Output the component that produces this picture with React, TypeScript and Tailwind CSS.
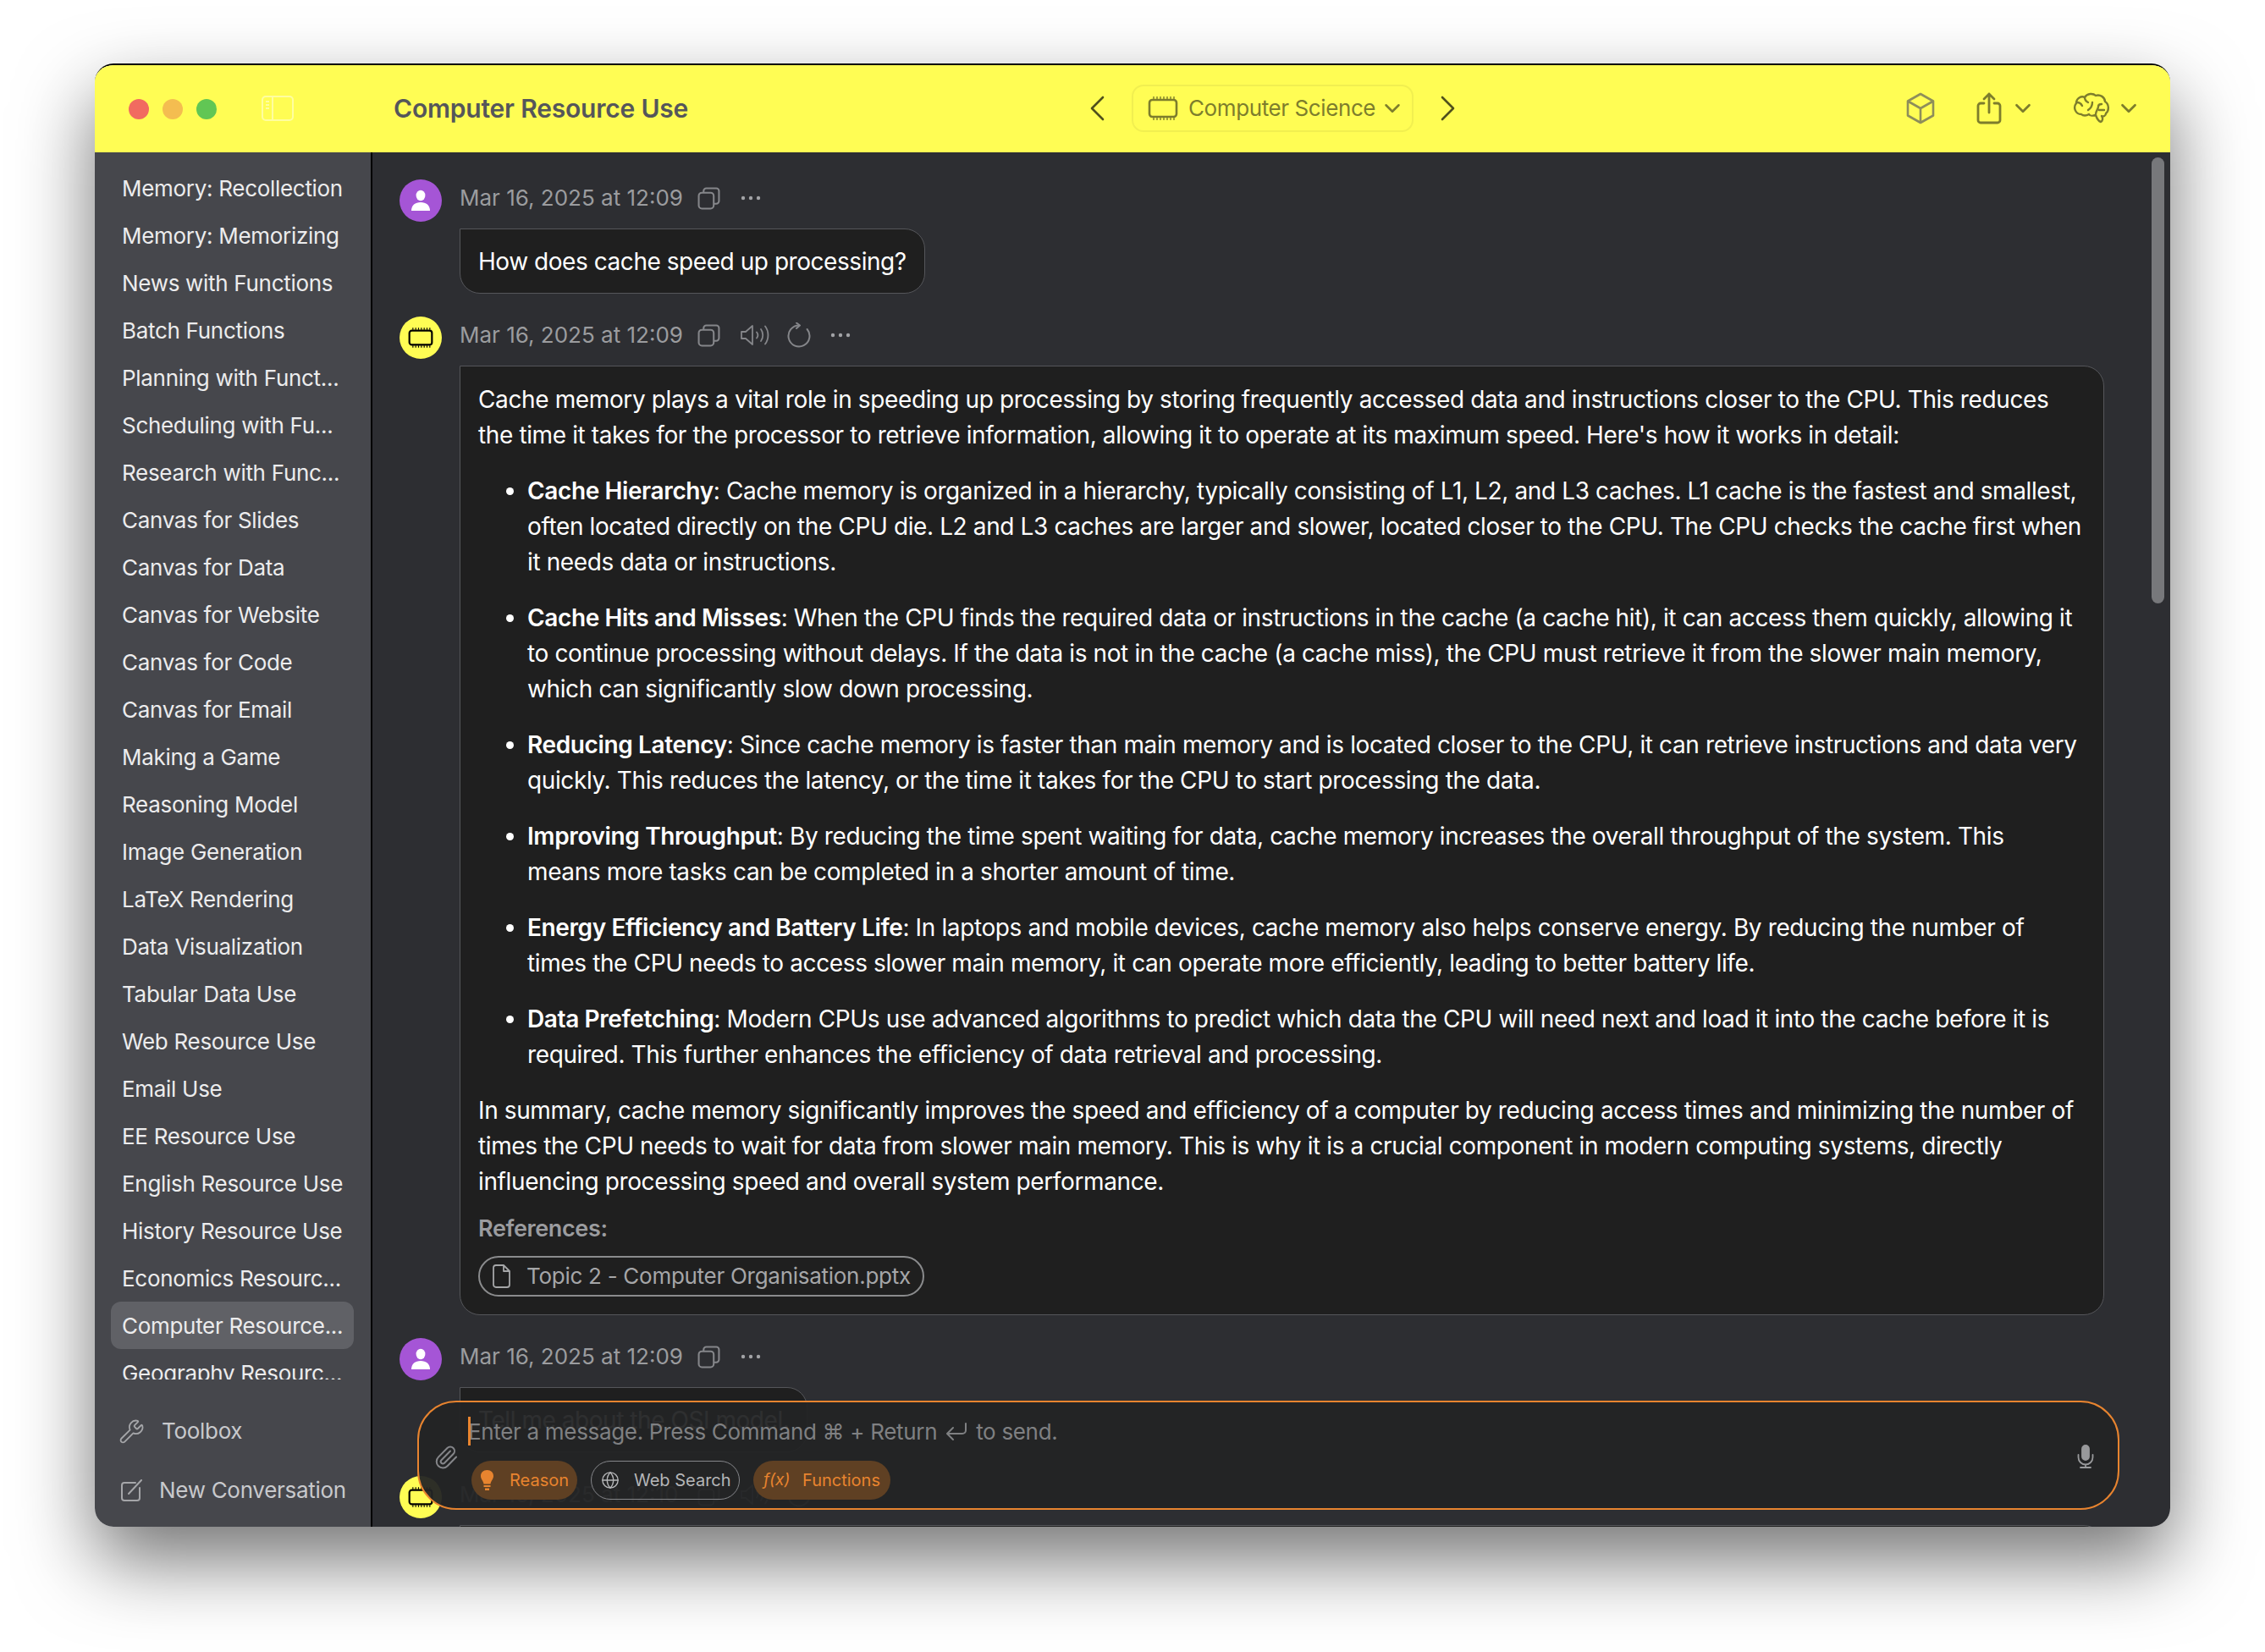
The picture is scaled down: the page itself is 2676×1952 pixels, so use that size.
import React from 'react';
import { ChevronDown, Wrench, Globe, Paperclip } from 'lucide-react';

const conversations = [
  'Memory: Recollection',
  'Memory: Memorizing',
  'News with Functions',
  'Batch Functions',
  'Planning with Funct...',
  'Scheduling with Fu...',
  'Research with Func...',
  'Canvas for Slides',
  'Canvas for Data',
  'Canvas for Website',
  'Canvas for Code',
  'Canvas for Email',
  'Making a Game',
  'Reasoning Model',
  'Image Generation',
  'LaTeX Rendering',
  'Data Visualization',
  'Tabular Data Use',
  'Web Resource Use',
  'Email Use',
  'EE Resource Use',
  'English Resource Use',
  'History Resource Use',
  'Economics Resourc...',
  'Computer Resource...',
  'Geography Resourc...',
];

const bullets = [
  {
    title: 'Cache Hierarchy',
    body: ': Cache memory is organized in a hierarchy, typically consisting of L1, L2, and L3 caches. L1 cache is the fastest and smallest, often located directly on the CPU die. L2 and L3 caches are larger and slower, located closer to the CPU. The CPU checks the cache first when it needs data or instructions.',
  },
  {
    title: 'Cache Hits and Misses',
    body: ': When the CPU finds the required data or instructions in the cache (a cache hit), it can access them quickly, allowing it to continue processing without delays. If the data is not in the cache (a cache miss), the CPU must retrieve it from the slower main memory, which can significantly slow down processing.',
  },
  {
    title: 'Reducing Latency',
    body: ': Since cache memory is faster than main memory and is located closer to the CPU, it can retrieve instructions and data very quickly. This reduces the latency, or the time it takes for the CPU to start processing the data.',
  },
  {
    title: 'Improving Throughput',
    body: ': By reducing the time spent waiting for data, cache memory increases the overall throughput of the system. This means more tasks can be completed in a shorter amount of time.',
  },
  {
    title: 'Energy Efficiency and Battery Life',
    body: ': In laptops and mobile devices, cache memory also helps conserve energy. By reducing the number of times the CPU needs to access slower main memory, it can operate more efficiently, leading to better battery life.',
  },
  {
    title: 'Data Prefetching',
    body: ': Modern CPUs use advanced algorithms to predict which data the CPU will need next and load it into the cache before it is required. This further enhances the efficiency of data retrieval and processing.',
  },
];

const ChipIcon = ({ className }: { className?: string }) => (
  <svg viewBox="0 0 36 28" fill="none" stroke="currentColor" className={className}>
    <rect x="2" y="4" width="32" height="20" rx="3.5" strokeWidth="2.6" />
    <path d="M7 0v3M11 0v3M15 0v3M19 0v3M23 0v3M27 0v3M31 0v3M7 25v3M11 25v3M15 25v3M19 25v3M23 25v3M27 25v3M31 25v3" strokeWidth="1.4" />
  </svg>
);

const CopyIcon = () => (
  <svg viewBox="0 0 26 26" fill="none" stroke="currentColor" strokeWidth="2" className="w-[27px] h-[27px] text-[#85868a]">
    <rect x="1.5" y="6.5" width="17" height="18" rx="3.5" />
    <path d="M7 6V4.5a3 3 0 0 1 3-3h11.5a3 3 0 0 1 3 3V16a3 3 0 0 1-3 3H19" />
  </svg>
);

const DotsIcon = () => (
  <svg viewBox="0 0 24 6" fill="currentColor" className="w-[24px] h-[6px] text-[#a2a3a6]">
    <circle cx="3" cy="3" r="2.2" />
    <circle cx="12" cy="3" r="2.2" />
    <circle cx="21" cy="3" r="2.2" />
  </svg>
);

const SpeakerIcon = () => (
  <svg viewBox="0 0 36 26" fill="none" stroke="currentColor" strokeWidth="1.8" strokeLinecap="round" strokeLinejoin="round" className="w-[36px] h-[26px] text-[#85868a]">
    <path d="M2 9h5l8-7v22l-8-7H2z" />
    <path d="M20 9.500c1.600 2 1.600 5 0 7M25 6c3 4 3 10 0 14M30 2.500c4.600 6 4.600 15 0 21" />
  </svg>
);

const RefreshIcon = () => (
  <svg viewBox="0 0 28 30" fill="none" stroke="currentColor" strokeWidth="2" strokeLinecap="round" strokeLinejoin="round" className="w-[28px] h-[30px] text-[#85868a]">
    <path d="M14 3.500A12.500 12.500 0 1 0 23.600 8" />
    <path d="M11 .5l4 3-4 3.500" />
  </svg>
);

const UserAvatar = () => (
  <div className="w-[50px] h-[50px] shrink-0 rounded-full bg-[#a555d6] flex items-center justify-center">
    <svg viewBox="0 0 24 26" fill="white" className="w-[24px] h-[26px]">
      <ellipse cx="12" cy="7" rx="5.400" ry="6.200" />
      <path d="M1 25c0-6.500 4.500-10 11-10s11 3.500 11 10z" />
    </svg>
  </div>
);

const BotAvatar = () => (
  <div className="w-[50px] h-[50px] shrink-0 rounded-full bg-[#fffd54] flex items-center justify-center text-black">
    <ChipIcon className="w-[30px] h-[24px]" />
  </div>
);

const MessageHeader = ({ bot, time = '12:09' }: { bot?: boolean; time?: string }) => (
  <div className="flex items-center h-[50px]">
    {bot ? <BotAvatar /> : <UserAvatar />}
    <div className="flex items-center ml-[21px] mb-[6px] text-[#9b9c9f] text-[26px] tracking-normal">
      <span className="w-[281px]">Mar 16, 2025 at {time}</span>
      <CopyIcon />
      {bot && (
        <>
          <div className="ml-[23px]">
            <SpeakerIcon />
          </div>
          <div className="ml-[20px]">
            <RefreshIcon />
          </div>
          <div className="ml-[23px]">
            <DotsIcon />
          </div>
        </>
      )}
      {!bot && (
        <div className="ml-[24px]">
          <DotsIcon />
        </div>
      )}
    </div>
  </div>
);

const Bubble = ({ children }: { children: React.ReactNode }) => (
  <div className="mt-[8px] ml-[71px] w-fit h-[77px] flex items-center px-[21px] bg-[#1f1f1f] border border-[#55565a] rounded-[24px] rounded-tl-none text-white tracking-[-0.45px]">
    {children}
  </div>
);

const Sidebar = () => (
  <aside className="w-[328px] shrink-0 bg-[#46474c] border-r-2 border-black flex flex-col text-[26px] tracking-[-0.3px]">
    <div className="h-[1450px] overflow-hidden pt-[14px] pl-[19px] pr-[20px] text-[#ececed]">
      {conversations.map((name) => (
        <div
          key={name}
          className={`h-[56px] px-[13px] pt-[2px] flex items-center whitespace-nowrap rounded-[12px] ${
            name === 'Computer Resource...' ? 'bg-[#606166]' : ''
          }`}
        >
          {name}
        </div>
      ))}
    </div>
    <div className="flex items-center pl-[28px] mt-[40px] text-[#c8c9cc]">
      <Wrench className="w-[31px] h-[31px] text-[#a5a6a9]" strokeWidth={1.4} />
      <span className="ml-[20px]">Toolbox</span>
    </div>
    <div className="flex items-center pl-[31px] mt-[28px] text-[#c8c9cc]">
      <svg viewBox="0 0 26 26" fill="none" stroke="#a5a6a9" strokeWidth="2" strokeLinecap="round" className="w-[26px] h-[26px]">
        <path d="M17 4H4a3 3 0 0 0-3 3v15a3 3 0 0 0 3 3h15a3 3 0 0 0 3-3V10M9 17L24 1" />
      </svg>
      <span className="ml-[19px]">New Conversation</span>
    </div>
  </aside>
);

const Header = () => (
  <header className="h-[103px] shrink-0 bg-[#fffd54] flex items-center pb-[2px] text-[#7d7d2c]">
    <div className="flex items-center gap-[16px] ml-[40px] mt-[2px]">
      <div className="w-[24px] h-[24px] rounded-full bg-[#f16b60]" />
      <div className="w-[24px] h-[24px] rounded-full bg-[#f4bd50]" />
      <div className="w-[24px] h-[24px] rounded-full bg-[#61c654]" />
    </div>
    <svg viewBox="0 0 38 30" fill="none" stroke="#fffea0" strokeWidth="2" className="w-[38px] h-[30px] ml-[53px]">
      <rect x="1" y="1" width="36" height="28" rx="4" />
      <path d="M13 1v28M5 7h4M5 11h4M5 15h4" />
    </svg>
    <h1 className="ml-[118px] w-[822px] text-[30px] font-semibold text-[#55565a] tracking-[-0.2px]">Computer Resource Use</h1>
    <svg viewBox="0 0 18 30" fill="none" stroke="#50501c" strokeWidth="2.600" strokeLinecap="round" strokeLinejoin="round" className="w-[18px] h-[30px]">
      <path d="M16 2L3 15l13 13" />
    </svg>
    <div className="ml-[32px] w-[333px] h-[56px] flex items-center border-2 border-[#f1ef50] rounded-[14px] pl-[17px] text-[26px] tracking-[-0.4px] whitespace-nowrap">
      <ChipIcon className="w-[36px] h-[28px]" />
      <span className="ml-[12px]">Computer Science</span>
      <ChevronDown className="w-[30px] h-[30px] ml-[5px] shrink-0" strokeWidth={2} />
    </div>
    <svg viewBox="0 0 18 30" fill="none" stroke="#50501c" strokeWidth="2.600" strokeLinecap="round" strokeLinejoin="round" className="w-[18px] h-[30px] ml-[32px]">
      <path d="M2 2l13 13L2 28" />
    </svg>
    <svg viewBox="0 0 34 38" fill="none" stroke="#8e8e5a" strokeWidth="2.600" strokeLinejoin="round" className="w-[34px] h-[38px] ml-[532px]">
      <path d="M17 2l15 8.500v17L17 36 2 27.500v-17zM2 10.500L17 19l15-8.500M17 19v17" />
    </svg>
    <svg viewBox="0 0 30 38" fill="none" stroke="currentColor" strokeWidth="2.800" strokeLinecap="round" strokeLinejoin="round" className="w-[30px] h-[38px] ml-[49px]">
      <path d="M9 13H5a3 3 0 0 0-3 3v17a3 3 0 0 0 3 3h20a3 3 0 0 0 3-3V16a3 3 0 0 0-3-3h-4M15 24V2M9 8l6-6 6 6" />
    </svg>
    <ChevronDown className="w-[30px] h-[30px] ml-[10px]" strokeWidth={2.2} />
    <svg viewBox="0 0 44 37" fill="none" stroke="currentColor" strokeWidth="2.400" strokeLinecap="round" strokeLinejoin="round" className="w-[44px] h-[37px] ml-[44px]">
      <path d="M10 26C3 26 0 18 4 13 4 7 10 4 14 6c3-5 10-5 13-2 5-2 11 2 11 7 5 3 5 11 1 14 0 3-3 4-5 3 2 3 1 6-1 7-3-1-5-5-6-8-3 1-7 1-8-1-3 2-7 2-9 0z" />
      <path d="M5 12c3 0 5 2 6 4M14 6c0 3 2 5 4 6M18 21c3-2 5-5 5-9M27 26c0-4 3-6 3-9 0-2 2-3 4-3M31 21h6" />
    </svg>
    <ChevronDown className="w-[30px] h-[30px] ml-[7px]" strokeWidth={2.2} />
  </header>
);

const Composer = () => (
  <div className="absolute left-[53px] top-[1475px] w-[2011px] h-[129px] bg-[#232425]/95 border-2 border-[#e8842f] rounded-[46px]">
    <div className="absolute left-[58px] top-[17px] w-[3px] h-[34px] bg-[#e8842f]" />
    <div className="flex items-center ml-[58px] mt-[14px] text-[26px] tracking-[-0.32px] text-[#7f8082] whitespace-nowrap">
      <span>Enter a message. Press Command ⌘ + Return</span>
      <svg viewBox="0 0 26 24" fill="none" stroke="currentColor" strokeWidth="2" strokeLinecap="round" strokeLinejoin="round" className="w-[26px] h-[24px] ml-[10px] mr-[10px]">
        <path d="M24 2v8a4 4 0 0 1-4 4H3M9 7l-7 7 7 7" />
      </svg>
      <span>to send.</span>
    </div>
    <div className="absolute left-[17px] top-[50px] text-[#85868a]">
      <Paperclip className="w-[30px] h-[30px]" strokeWidth={1.6} />
    </div>
    <div className="absolute right-[28px] top-[50px] text-[#98999b]">
      <svg viewBox="0 0 20 28" fill="none" stroke="currentColor" strokeWidth="1.800" strokeLinecap="round" className="w-[20px] h-[28px]">
        <rect x="6" y="1" width="8" height="17" rx="4" fill="currentColor" />
        <path d="M1.500 12v3a8.500 8.500 0 0 0 17 0v-3M10 23.500V27M4 27h12" />
      </svg>
    </div>
    <div className="flex items-center mt-[13px] ml-[62px] text-[20px] tracking-normal">
      <div className="w-[125px] h-[46px] flex items-center rounded-full bg-[#5f4023] text-[#e8842f] pl-[11px] whitespace-nowrap">
        <svg viewBox="0 0 15 24" fill="currentColor" className="w-[15px] h-[24px]">
          <path d="M7.500 0c4.500 0 7.500 3 7.500 7 0 4-3 5.500-3.500 9.500h-8C3 12.500 0 11 0 7c0-4 3-7 7.500-7zM3.500 18h8v2h-8zM5 21.500h5V24H5z" />
        </svg>
        <span className="ml-[19px]">Reason</span>
      </div>
      <div className="ml-[16px] w-[176px] h-[46px] flex items-center rounded-full border border-[#85868a] text-[#b5b6b8] pl-[11px] whitespace-nowrap">
        <Globe className="w-[22px] h-[22px]" strokeWidth={1.5} />
        <span className="ml-[17px]">Web Search</span>
      </div>
      <div className="ml-[16px] w-[162px] h-[46px] flex items-center rounded-full bg-[#5f4023] text-[#e8842f] pl-[12px] whitespace-nowrap">
        <span className="italic text-[19px] w-[46px]">f(x)</span>
        <span>Functions</span>
      </div>
    </div>
  </div>
);

export default function App() {
  return (
    <div className="w-[2676px] h-[1952px] bg-white pt-[75px] pl-[112px] overflow-hidden font-['Inter',sans-serif] text-[28px] leading-[42px] tracking-[-0.38px]">
      <div className="w-[2452px] h-[1729px] flex flex-col overflow-hidden rounded-[22px] border-t-2 border-black shadow-[0_40px_90px_rgba(0,0,0,0.55)]">
        <Header />
        <div className="flex h-[1624px]">
          <Sidebar />
          <main className="relative flex-1 bg-[#2d2e32] overflow-hidden">
            <div className="pt-[32px] pl-[32px] pr-[78px]">
              <MessageHeader />
              <Bubble>How does cache speed up processing?</Bubble>

              <div className="mt-[27px]">
                <MessageHeader bot />
              </div>
              <div className="mt-[8px] ml-[71px] px-[21px] pt-[18px] pb-[21px] bg-[#1f1f1f] border border-[#55565a] rounded-[24px] rounded-tl-none text-white">
                <p>
                  Cache memory plays a vital role in speeding up processing by storing frequently accessed data and instructions closer to the CPU. This reduces the time it takes for the processor to retrieve information, allowing it to operate at its maximum speed. Here's how it works in detail:
                </p>
                <ul className="list-disc pl-[58px] pr-[4px]">
                  {bullets.map((b) => (
                    <li key={b.title} className="mt-[24px]">
                      <strong className="font-semibold">{b.title}</strong>
                      {b.body}
                    </li>
                  ))}
                </ul>
                <p className="mt-[24px]">
                  In summary, cache memory significantly improves the speed and efficiency of a computer by reducing access times and minimizing the number of times the CPU needs to wait for data from slower main memory. This is why it is a crucial component in modern computing systems, directly influencing processing speed and overall system performance.
                </p>
                <div className="mt-[14px] font-semibold text-[#9b9c9f] text-[27px]">References:</div>
                <div className="mt-[11px] w-[527px] h-[48px] flex items-center border-2 border-[#8a8b8d] rounded-full pl-[14px] text-[#a5a6a8] text-[26px] tracking-[-0.28px] whitespace-nowrap">
                  <svg viewBox="0 0 22 28" fill="none" stroke="currentColor" strokeWidth="1.800" strokeLinejoin="round" className="w-[22px] h-[28px]">
                    <path d="M2 4a3 3 0 0 1 3-3h9l7 7v16a3 3 0 0 1-3 3H5a3 3 0 0 1-3-3zM14 1v7h7" />
                  </svg>
                  <span className="ml-[19px]">Topic 2 - Computer Organisation.pptx</span>
                </div>
              </div>

              <div className="mt-[27px]">
                <MessageHeader />
              </div>
              <Bubble>Tell me about the OSI model.</Bubble>

              <div className="mt-[28px]">
                <MessageHeader bot time="12:10" />
              </div>
              <div className="mt-[8px] ml-[71px] h-[300px] bg-[#1f1f1f] border border-[#55565a] rounded-[24px] rounded-tl-none" />
            </div>

            <div className="absolute right-[7px] top-[6px] w-[15px] h-[527px] rounded-full bg-[#77787b]" />
            <Composer />
          </main>
        </div>
      </div>
    </div>
  );
}
